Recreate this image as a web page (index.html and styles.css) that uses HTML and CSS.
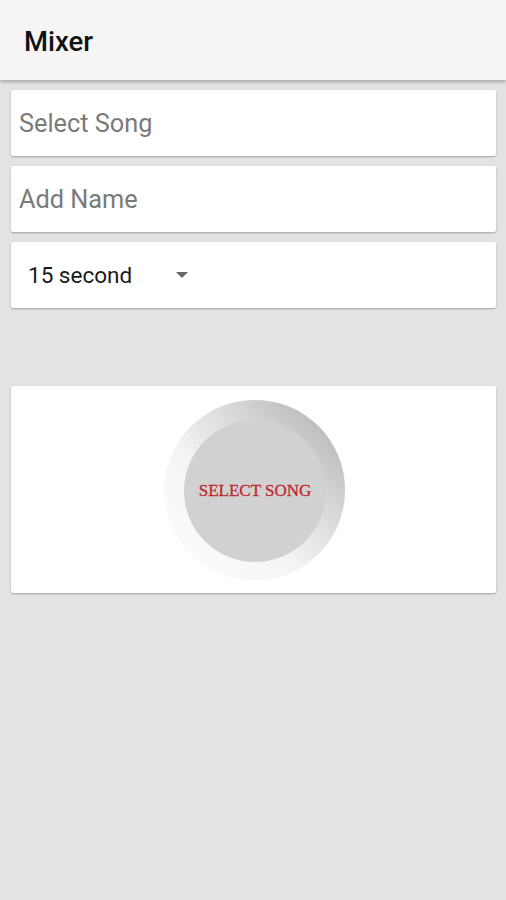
FILE: index.html
```html
<!DOCTYPE html>
<html lang="en">
<head>
  <meta charset="UTF-8">
  <meta name="viewport" content="width=device-width, initial-scale=1.0">
  <title>Mixer</title>
  <link rel="stylesheet" href="styles.css">
</head>
<body>

<header class="appbar">
  <h1 class="appbar-title">Mixer</h1>
</header>

<main class="content">
  <div class="card field">
    <span class="placeholder">Select Song</span>
  </div>
  <div class="card field">
    <span class="placeholder">Add Name</span>
  </div>
  <div class="card field spinner">
    <span class="spinner-value">15 second</span>
    <span class="spinner-arrow"></span>
  </div>

  <div class="card player">
    <div class="knob">
      <div class="knob-face">
        <span class="knob-label">SELECT SONG</span>
      </div>
    </div>
  </div>
</main>

</body>
</html>
```

FILE: styles.css
```css
body { margin: 0; background: #e3e3e3; font-family: Roboto, "Noto Sans", sans-serif; height: 900px; }

.appbar { height: 80px; background: #f5f5f5; box-shadow: 0 2px 3px rgba(0,0,0,0.25); display: flex; align-items: center; padding-left: 24px; position: relative; }
.appbar-title { margin: 0; font-size: 27.5px; font-weight: 500; color: #111; padding-top: 2px; }

.content { padding: 10px 10px 0 11px; display: flex; flex-direction: column; gap: 10px; }

.card { background: #fff; border-radius: 2px; box-shadow: 0 1px 2px rgba(0,0,0,0.3); }

.field { height: 66px; display: flex; align-items: center; padding-left: 8px; }
.placeholder { font-size: 25.3px; color: #7a7a7a; }

.spinner { padding-left: 17px; }
.spinner-value { font-size: 22.5px; color: #1a1a1a; }
.spinner-arrow { margin-left: 44px; width: 0; height: 0; border-left: 6.5px solid transparent; border-right: 6.5px solid transparent; border-top: 6px solid #666; }

.player { margin-top: 68px; height: 207px; display: flex; justify-content: center; align-items: center; }

.knob { width: 180px; height: 180px; border-radius: 50%; display: flex; align-items: center; justify-content: center; margin-left: 3px; margin-top: 1px;
  background: linear-gradient(225deg, #a9abac 0%, #d8d9da 35%, #f4f4f4 60%, #ffffff 100%);
  box-shadow: 0 0 1px rgba(0,0,0,0.15); }
.knob-face { width: 142px; height: 142px; border-radius: 50%; background: #d1d1d1; display: flex; align-items: center; justify-content: center; margin-top: 2px; }
.knob-label { font-family: "Liberation Serif", serif; font-size: 17px; color: #c0262e; -webkit-text-stroke: 0.3px #c0262e; }
```
